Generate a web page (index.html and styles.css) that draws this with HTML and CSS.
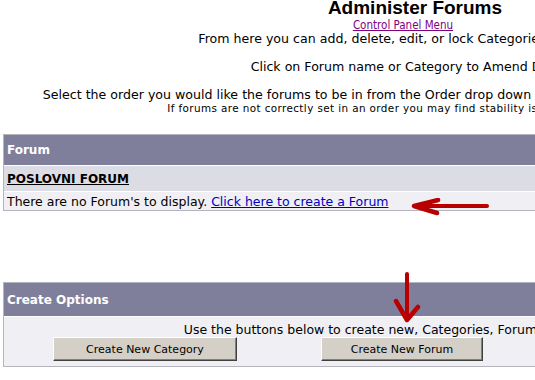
FILE: index.html
```html
<!DOCTYPE html>
<html lang="en">
<head>
<meta charset="UTF-8">
<title>Administer Forums</title>
<link rel="stylesheet" href="styles.css">
</head>
<body>
<div class="page">
  <h1>Administer Forums</h1>
  <div class="intro">
    <a class="visited" href="#">Control Panel Menu</a><br>
    From here you can add, delete, edit, or lock Categories, and Forums.<br>
    <br>
    Click on Forum name or Category to Amend Details.<br>
    <br>
    Select the order you would like the forums to be in from the Order drop down lists below, then click the Update Order.
    <div class="small">If forums are not correctly set in an order you may find stability issues within the forum.</div>
  </div>

  <div class="tbl forums">
    <div class="head">Forum</div>
    <div class="cat"><a href="#">POSLOVNI FORUM</a></div>
    <div class="row">There are no Forum's to display.&nbsp;<a href="#">Click here to create a Forum</a></div>
    <svg class="arrow-left" width="90" height="20" viewBox="0 0 90 20">
      <path d="M14 8 L85 8" stroke="#b80000" stroke-width="4" stroke-linecap="round"/>
      <path d="M36 2 L12 8 L35 15" stroke="#b80000" stroke-width="4.5" fill="none" stroke-linecap="round" stroke-linejoin="round"/>
    </svg>
  </div>

  <div class="tbl create">
    <div class="head">Create Options</div>
    <div class="row options">
      <div class="note">Use the buttons below to create new, Categories, Forums, or Sub Forums.</div>
      <div class="buttons">
        <button class="cat-btn">Create New Category</button>
        <button class="forum-btn">Create New Forum</button>
        <button class="forum-btn">Create New Sub Forum</button>
      </div>
    </div>
    <svg class="arrow-down" width="30" height="56" viewBox="0 0 30 56">
      <path d="M15 2 L15 46" stroke="#b80000" stroke-width="4" stroke-linecap="round"/>
      <path d="M4 29 L15 48 L26 35" stroke="#b80000" stroke-width="4.5" fill="none" stroke-linecap="round" stroke-linejoin="round"/>
    </svg>
  </div>
</div>
</body>
</html>
```

FILE: styles.css
```css
/* admin page, old table look */
body {
  margin: 0;
  overflow: hidden;
  background: #fff;
  font-family: "DejaVu Sans", Verdana, sans-serif;
  font-size: 12px;
  color: #000;
}
.page {
  width: 824px;
  padding: 0 3px;
}
h1 {
  margin: 0 0 3px 0;
  font-family: "Liberation Sans", Arial, sans-serif;
  font-size: 19px;
  line-height: 15px;
  text-align: center;
}
.intro {
  text-align: center;
  font-size: 12.6px;
  line-height: 14px;
}
.intro a.visited {
  display: inline-block;
  margin-right: 24px;
  font-family: "DejaVu Sans Condensed", "DejaVu Sans", sans-serif;
  font-stretch: condensed;
  font-size: 11.5px;
  color: #800080;
}
.small {
  font-size: 10.4px;
  letter-spacing: 0.4px;
  line-height: 12px;
}
.tbl {
  position: relative;
  display: grid;
  gap: 1px;
  border: 1px solid #b4b4bc;
  background: #fff;
}
.forums {
  margin-top: 20px;
}
.head {
  background: #7f7f9b;
  color: #fff;
  font-weight: bold;
  padding: 0 3px;
  display: flex;
  align-items: center;
}
.forums .head { height: 30px; }
.cat {
  background: #dcdce4;
  height: 25px;
  padding: 0 3px;
  display: flex;
  align-items: center;
  font-weight: bold;
}
.cat a {
  color: #000;
}
.row {
  background: #efeff4;
  padding: 0 3px;
  min-height: 18px;
  display: flex;
  align-items: center;
  font-size: 12.5px;
}
.row a {
  color: #0000c0;
}
.create {
  margin-top: 71px;
}
.create .head { height: 33px; }
.options {
  display: block;
  height: 49px;
  padding: 6px 0 0 0;
  box-sizing: border-box;
}
.note {
  text-align: center;
  line-height: 14px;
}
.buttons {
  display: flex;
  gap: 84px;
  padding-left: 49px;
}
button {
  font-family: "DejaVu Sans", Tahoma, sans-serif;
  font-size: 11px;
  background: #d4d0c8;
  color: #000;
  height: 24px;
  border: 1px solid;
  border-color: #fff #404040 #404040 #fff;
  box-shadow: inset -1px -1px 0 #808080;
  padding: 0;
}
.cat-btn { width: 184px; }
.forum-btn { width: 162px; }
.arrow-left {
  position: absolute;
  left: 398px;
  top: 63px;
}
.arrow-down {
  position: absolute;
  left: 388px;
  top: -11px;
}
```
